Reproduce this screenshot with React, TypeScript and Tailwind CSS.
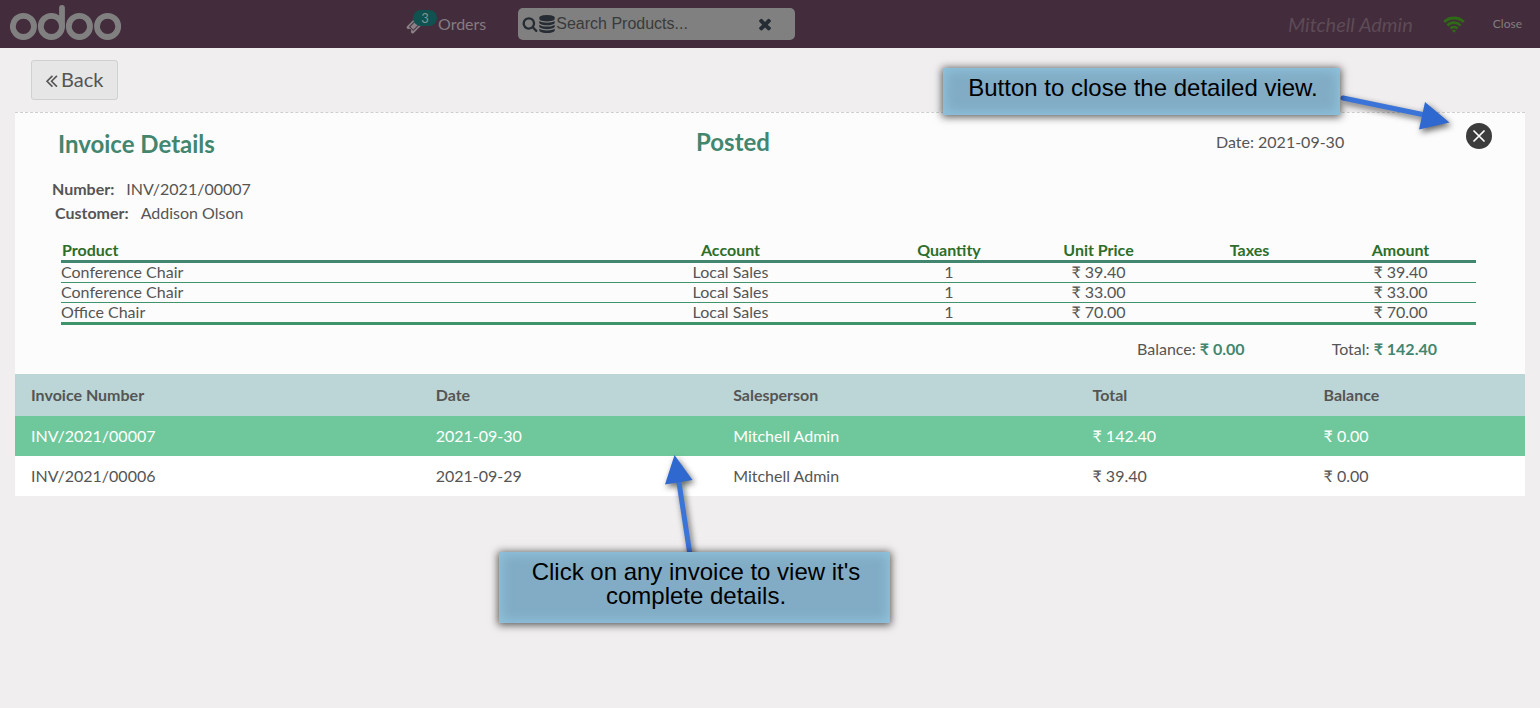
import React from "react";

const ICONS = {
  search:
    "M1216 832q0-185-131.5-316.5t-316.5-131.5-316.5 131.5-131.5 316.5 131.5 316.5 316.5 131.5 316.5-131.5 131.5-316.5zm512 832q0 52-38 90t-90 38q-54 0-90-38l-343-342q-179 124-399 124-143 0-273.5-55.5t-225-150-150-225-55.5-273.5 55.5-273.5 150-225 225-150 273.5-55.5 273.5 55.5 225 150 150 225 55.5 273.5q0 220-124 399l343 343q37 37 37 90z",
  database:
    "M896 768q237 0 443-43t325-127v170q0 69-103 128t-280 93.5-385 34.5-385-34.5-280-93.5-103-128v-170q119 84 325 127t443 43zm0 768q237 0 443-43t325-127v170q0 69-103 128t-280 93.5-385 34.5-385-34.5-280-93.5-103-128v-170q119 84 325 127t443 43zm0-384q237 0 443-43t325-127v170q0 69-103 128t-280 93.5-385 34.5-385-34.5-280-93.5-103-128v-170q119 84 325 127t443 43zm0-1152q208 0 385 34.5t280 93.5 103 128v128q0 69-103 128t-280 93.5-385 34.5-385-34.5-280-93.5-103-128v-128q0-69 103-128t280-93.5 385-34.5z",
  times:
    "M1490 1322q0 40-28 68l-136 136q-28 28-68 28t-68-28l-294-294-294 294q-28 28-68 28t-68-28l-136-136q-28-28-28-68t28-68l294-294-294-294q-28-28-28-68t28-68l136-136q28-28 68-28t68 28l294 294 294-294q28-28 68-28t68 28l136 136q28 28 28 68t-28 68l-294 294 294 294q28 28 28 68z",
  ticket:
    "M1024 452l316 316-572 572-316-316zm-211 979l618-618q19-19 19-45t-19-45l-362-362q-18-18-45-18t-45 18l-618 618q-19 19-19 45t19 45l362 362q18 18 45 18t45-18zm889-637l-907 908q-37 37-90.5 37t-90.5-37l-126-126q56-56 56-136t-56-136-136-56-136 56l-125-126q-37-37-37-90.5t37-90.5l907-906q37-37 90.5-37t90.5 37l125 125q-56 56-56 136t56 136 136 56 136-56l126 125q37 37 37 90.5t-37 90.5z",
  back:
    "M1011 1376q0 13-10 23l-50 50q-10 10-23 10t-23-10l-466-466q-10-10-10-23t10-23l466-466q10-10 23-10t23 10l50 50q10 10 10 23t-10 23l-393 393 393 393q10 10 10 23zm384 0q0 13-10 23l-50 50q-10 10-23 10t-23-10l-466-466q-10-10-10-23t10-23l466-466q10-10 23-10t23 10l50 50q10 10 10 23t-10 23l-393 393 393 393q10 10 10 23z",
};

function Icon({ name, className }: { name: keyof typeof ICONS; className: string }) {
  return (
    <svg viewBox="0 0 1792 1792" fill="currentColor" aria-hidden="true" className={className}>
      <path d={ICONS[name]} />
    </svg>
  );
}

function Logo() {
  return (
    <svg
      viewBox="0 0 112 36"
      fill="none"
      stroke="currentColor"
      strokeWidth="5.8"
      role="img"
      aria-label="odoo"
      className="mb-0.5 h-9 w-28 text-[#808080]"
    >
      <circle cx="13.4" cy="21.4" r="10.6" />
      <circle cx="41.4" cy="21.4" r="10.6" />
      <path d="M52 21.4V3" strokeLinecap="round" />
      <circle cx="69.4" cy="21.4" r="10.6" />
      <circle cx="97.6" cy="21.4" r="10.6" />
    </svg>
  );
}

function Header() {
  return (
    <header className="flex h-12 items-center bg-[#432c3b] text-[#857c82]">
      <div className="flex flex-1 items-center pl-[10px]">
        <div className="w-[396px] shrink-0">
          <Logo />
        </div>
        <button type="button" className="relative flex items-center text-base leading-6">
          <Icon name="ticket" className="mt-0.5 h-[17px] w-[17px] text-[#8a8086]" />
          <span className="absolute -top-0.5 left-[7px] h-4 w-6 rounded-full bg-[#0f5250] text-center text-[13px] leading-4 text-[#7f9696]">
            3
          </span>
          <span className="ml-[15px]">Orders</span>
        </button>
        <div className="ml-8 flex h-8 w-[277px] shrink-0 items-center rounded-[5px] bg-[#808080] pl-1 text-[#262c33]">
          <Icon name="search" className="h-4 w-4" />
          <Icon name="database" className="h-[18px] w-[18px]" />
          <input
            type="text"
            aria-label="Search Products"
            placeholder="Search Products..."
            className="h-6 w-[200px] bg-transparent font-['Liberation_Sans',sans-serif] text-base text-[#333] outline-none placeholder:text-[#3a3a3a]"
          />
          <button type="button" aria-label="Clear search">
            <Icon name="times" className="h-[18px] w-[18px]" />
          </button>
        </div>
      </div>
      <div className="flex items-center pr-[18px]">
        <span className="text-xl leading-6 italic text-[#5d4b57]">Mitchell Admin</span>
        <svg
          viewBox="0 0 22 17"
          fill="none"
          stroke="currentColor"
          strokeWidth="2.8"
          aria-label="Connected"
          role="img"
          className="ml-[30px] h-[17px] w-[22px] text-[#2f6a17]"
        >
          <path d="M1.200 6a14 14 0 0 1 19.600 0" />
          <path d="M4.400 9.400a9.400 9.400 0 0 1 13.200 0" />
          <path d="M7.500 12.600a5 5 0 0 1 7 0" />
          <path d="M9 14.700a2.800 2.800 0 0 1 4 0L11 16.800z" fill="currentColor" stroke="none" />
        </svg>
        <button type="button" className="ml-7 text-xs leading-4">
          Close
        </button>
      </div>
    </header>
  );
}

const LINES = [
  { product: "Conference Chair", account: "Local Sales", quantity: 1, price: "₹ 39.40", taxes: "", amount: "₹ 39.40" },
  { product: "Conference Chair", account: "Local Sales", quantity: 1, price: "₹ 33.00", taxes: "", amount: "₹ 33.00" },
  { product: "Office Chair", account: "Local Sales", quantity: 1, price: "₹ 70.00", taxes: "", amount: "₹ 70.00" },
];

function InvoiceDetails() {
  return (
    <section className="border-t border-dashed border-[#cfcfcf] bg-[#fcfcfc]">
      <div className="grid grid-cols-[638fr_520fr_250fr_59px] items-center pt-[13px] pl-[43px]">
        <h1 className="pt-1 text-2xl leading-7 font-bold text-[#43866f]">Invoice Details</h1>
        <h2 className="text-2xl leading-7 font-bold text-[#43866f]">Posted</h2>
        <span>Date: 2021-09-30</span>
        <button
          type="button"
          aria-label="Close details"
          className="-mt-3 flex h-[26px] w-[26px] items-center justify-center rounded-full bg-[#3c3c3c] text-white"
        >
          <svg viewBox="0 0 12 12" stroke="currentColor" strokeWidth="1.7" strokeLinecap="round" className="h-3 w-3">
            <path d="M1 1l10 10M11 1L1 11" />
          </svg>
        </button>
      </div>
      <dl className="pt-[19px]">
        <div className="flex pl-[37px] leading-6">
          <dt className="font-bold">Number:</dt>
          <dd className="pl-3">INV/2021/00007</dd>
        </div>
        <div className="flex pl-[40px] leading-6">
          <dt className="font-bold">Customer:</dt>
          <dd className="pl-3">Addison Olson</dd>
        </div>
      </dl>
      <div className="pt-4 pr-[49px] pl-[46px]">
        <table className="w-full table-fixed border-separate border-spacing-0 text-center leading-[18px]">
          <colgroup>
            <col />
            <col className="w-[289px]" />
            <col className="w-[148px]" />
            <col className="w-[151px]" />
            <col className="w-[151px]" />
            <col className="w-[151px]" />
          </colgroup>
          <thead>
            <tr className="text-[#2c6e2a] *:border-b-3 *:border-[#43866f] *:px-px *:pb-px *:font-bold">
              <th className="text-left">Product</th>
              <th>Account</th>
              <th>Quantity</th>
              <th>Unit Price</th>
              <th>Taxes</th>
              <th>Amount</th>
            </tr>
          </thead>
          <tbody>
            {LINES.map((line, i) => (
              <tr key={i} className="*:border-b *:border-[#3f946b] *:pb-px last:*:border-b-3">
                <td className="text-left">{line.product}</td>
                <td>{line.account}</td>
                <td>{line.quantity}</td>
                <td>{line.price}</td>
                <td>{line.taxes}</td>
                <td>{line.amount}</td>
              </tr>
            ))}
          </tbody>
        </table>
      </div>
      <div className="flex justify-end gap-[87px] pt-3 pr-[88px] pb-[13px] leading-6">
        <span>
          Balance: <b className="text-[#43866f]">₹ 0.00</b>
        </span>
        <span>
          Total: <b className="text-[#43866f]">₹ 142.40</b>
        </span>
      </div>
    </section>
  );
}

const INVOICES = [
  { number: "INV/2021/00007", date: "2021-09-30", person: "Mitchell Admin", total: "₹ 142.40", balance: "₹ 0.00" },
  { number: "INV/2021/00006", date: "2021-09-29", person: "Mitchell Admin", total: "₹ 39.40", balance: "₹ 0.00" },
];

function InvoiceList() {
  return (
    <table className="w-full table-fixed text-left">
      <colgroup>
        <col className="w-[26.8%]" />
        <col className="w-[19.7%]" />
        <col className="w-[23.8%]" />
        <col className="w-[15.3%]" />
        <col className="w-[14.4%]" />
      </colgroup>
      <thead>
        <tr className="h-[42px] bg-[#bcd5d6] *:px-4 *:font-bold">
          <th>Invoice Number</th>
          <th>Date</th>
          <th>Salesperson</th>
          <th>Total</th>
          <th>Balance</th>
        </tr>
      </thead>
      <tbody>
        {INVOICES.map((inv, i) => (
          <tr
            key={inv.number}
            className={i === 0 ? "h-10 bg-[#6ec89b] text-white *:px-4" : "h-10 bg-white *:px-4"}
          >
            <td>{inv.number}</td>
            <td>{inv.date}</td>
            <td>{inv.person}</td>
            <td>{inv.total}</td>
            <td>{inv.balance}</td>
          </tr>
        ))}
      </tbody>
    </table>
  );
}

const NOTE =
  "bg-[#82acc5] pt-2 pl-[3px] text-center font-['Liberation_Sans',sans-serif] text-2xl leading-6 text-black shadow-[0_1px_8px_1px_rgba(0,0,0,0.65),inset_0_0_12px_2px_#90c4df]";

export default function App() {
  return (
    <div className="relative min-h-screen bg-[#f0eeee] font-[Lato,'Noto_Sans',sans-serif] text-base leading-6 text-[#555]">
      <Header />
      <main className="px-[15px] pt-3">
        <button
          type="button"
          className="mb-3 ml-4 flex h-10 items-center rounded-[3px] border border-[#cfd0d0] bg-[#e6e6e6] pr-[14px] pb-0.5 pl-[9px] text-xl leading-6"
        >
          <Icon name="back" className="mt-0.5 h-[21px] w-[21px]" />
          <span className="-ml-px">Back</span>
        </button>
        <InvoiceDetails />
        <InvoiceList />
      </main>

      <div className="absolute top-[68px] right-[200px]">
        <svg
          viewBox="0 0 120 50"
          className="absolute top-5 left-full h-[50px] w-[120px] overflow-visible drop-shadow-[2px_3px_3px_rgba(0,0,0,0.6)]"
        >
          <path d="M3 10L85 27" stroke="#3a74d8" strokeWidth="5" strokeLinecap="round" />
          <path d="M109.500 34.500L85 14L79 41.500z" fill="#2f69cf" />
        </svg>
        <p className={`${NOTE} relative h-[47px] w-[397px]`}>Button to close the detailed view.</p>
      </div>

      <div className="absolute top-[552px] left-[499px]">
        <svg
          viewBox="0 0 40 110"
          className="absolute bottom-full left-[160px] h-[110px] w-10 overflow-visible drop-shadow-[2px_3px_3px_rgba(0,0,0,0.6)]"
        >
          <path d="M19 34L31 113" stroke="#3a74d8" strokeWidth="5" />
          <path d="M15.500 13L6 42.500L33.500 38z" fill="#2f69cf" />
        </svg>
        <p className={`${NOTE} relative h-[71px] w-[391px]`}>Click on any invoice to view it's complete details.</p>
      </div>
    </div>
  );
}
